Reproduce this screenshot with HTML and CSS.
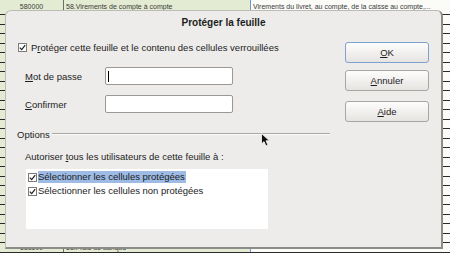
FILE: index.html
```html
<!DOCTYPE html>
<html lang="fr">
    <head>
        <meta charset="utf-8" />
        <title>Protéger la feuille</title>
        <link rel="stylesheet" href="styles.css">
    </head>
    <body>
        <div class="ecran">
            <div class="feuille">
                <div class="ligne ligne--tete">
                    <div class="cellule col-a">580000</div>
                    <div class="cellule col-b">58.Virements de compte à compte</div>
                    <div class="cellule col-c">Virements du livret, au compte, de la caisse au compte,...</div>
                </div>
                <div class="ligne"><div class="cellule col-a"></div><div class="cellule col-b"></div><div class="cellule col-c"></div></div>
                <div class="ligne"><div class="cellule col-a"></div><div class="cellule col-b"></div><div class="cellule col-c"></div></div>
                <div class="ligne"><div class="cellule col-a"></div><div class="cellule col-b"></div><div class="cellule col-c"></div></div>
                <div class="ligne"><div class="cellule col-a"></div><div class="cellule col-b"></div><div class="cellule col-c"></div></div>
                <div class="ligne"><div class="cellule col-a"></div><div class="cellule col-b"></div><div class="cellule col-c"></div></div>
                <div class="ligne"><div class="cellule col-a"></div><div class="cellule col-b"></div><div class="cellule col-c"></div></div>
                <div class="ligne"><div class="cellule col-a"></div><div class="cellule col-b"></div><div class="cellule col-c"></div></div>
                <div class="ligne"><div class="cellule col-a"></div><div class="cellule col-b"></div><div class="cellule col-c"></div></div>
                <div class="ligne"><div class="cellule col-a"></div><div class="cellule col-b"></div><div class="cellule col-c"></div></div>
                <div class="ligne"><div class="cellule col-a"></div><div class="cellule col-b"></div><div class="cellule col-c"></div></div>
                <div class="ligne"><div class="cellule col-a"></div><div class="cellule col-b"></div><div class="cellule col-c"></div></div>
                <div class="ligne"><div class="cellule col-a"></div><div class="cellule col-b"></div><div class="cellule col-c"></div></div>
                <div class="ligne"><div class="cellule col-a"></div><div class="cellule col-b"></div><div class="cellule col-c"></div></div>
                <div class="ligne"><div class="cellule col-a"></div><div class="cellule col-b"></div><div class="cellule col-c"></div></div>
                <div class="ligne"><div class="cellule col-a"></div><div class="cellule col-b"></div><div class="cellule col-c"></div></div>
                <div class="ligne"><div class="cellule col-a"></div><div class="cellule col-b"></div><div class="cellule col-c"></div></div>
                <div class="ligne"><div class="cellule col-a"></div><div class="cellule col-b"></div><div class="cellule col-c"></div></div>
                <div class="ligne"><div class="cellule col-a"></div><div class="cellule col-b"></div><div class="cellule col-c"></div></div>
                <div class="ligne"><div class="cellule col-a"></div><div class="cellule col-b"></div><div class="cellule col-c"></div></div>
                <div class="ligne"><div class="cellule col-a"></div><div class="cellule col-b"></div><div class="cellule col-c"></div></div>
                <div class="ligne"><div class="cellule col-a"></div><div class="cellule col-b"></div><div class="cellule col-c"></div></div>
                <div class="ligne"><div class="cellule col-a"></div><div class="cellule col-b"></div><div class="cellule col-c"></div></div>
                <div class="ligne"><div class="cellule col-a"></div><div class="cellule col-b"></div><div class="cellule col-c"></div></div>
                <div class="ligne"><div class="cellule col-a">581000</div><div class="cellule col-b">58.Virements internes</div><div class="cellule col-c"></div></div>
                <div class="ligne"><div class="cellule col-a">581100</div><div class="cellule col-b">58.Frais de banque</div><div class="cellule col-c"></div></div>
            </div>

            <div class="dialogue">
                <div class="dialogue_titre">Protéger la feuille</div>

                <div class="dialogue_corps">
                    <div class="colonne">
                        <div class="option option--principale">
                            <svg class="case" viewBox="0 0 9 9"><rect x="0.5" y="0.5" width="8" height="8" fill="#fff" stroke="#7b7b7b"/><path d="M1.8 4.6 L3.7 6.6 L7.2 2.2" fill="none" stroke="#1e1e1e" stroke-width="1.2"/></svg>
                            <span>P<u>r</u>otéger cette feuille et le contenu des cellules verrouillées</span>
                        </div>

                        <div class="champ champ--passe">
                            <label class="champ_etiquette"><u>M</u>ot de passe</label>
                            <div class="champ_saisie"><span class="curseur-texte"></span></div>
                        </div>

                        <div class="champ champ--confirmer">
                            <label class="champ_etiquette"><u>C</u>onfirmer</label>
                            <div class="champ_saisie"></div>
                        </div>

                        <div class="separateur">
                            <span>Options</span>
                            <div class="separateur_trait"></div>
                        </div>

                        <div class="autoriser">Autoriser <u>t</u>ous les utilisateurs de cette feuille à :</div>

                        <div class="liste">
                            <div class="liste_item">
                                <svg class="case" viewBox="0 0 9 9"><rect x="0.5" y="0.5" width="8" height="8" fill="#fff" stroke="#7b7b7b"/><path d="M1.8 4.6 L3.7 6.6 L7.2 2.2" fill="none" stroke="#1e1e1e" stroke-width="1.2"/></svg>
                                <span class="liste_texte liste_texte--choisi">Sélectionner les cellules protégées</span>
                            </div>
                            <div class="liste_item">
                                <svg class="case" viewBox="0 0 9 9"><rect x="0.5" y="0.5" width="8" height="8" fill="#fff" stroke="#7b7b7b"/><path d="M1.8 4.6 L3.7 6.6 L7.2 2.2" fill="none" stroke="#1e1e1e" stroke-width="1.2"/></svg>
                                <span class="liste_texte">Sélectionner les cellules non protégées</span>
                            </div>
                        </div>
                    </div>

                    <div class="boutons">
                        <button class="bouton bouton--ok"><u>O</u>K</button>
                        <button class="bouton bouton--annuler"><u>A</u>nnuler</button>
                        <button class="bouton bouton--aide"><u>A</u>ide</button>
                    </div>
                </div>
            </div>

            <svg class="pointeur" viewBox="0 0 10 14" width="10" height="14">
                <path d="M0.5 0.5 L0.5 11 L3 8.6 L5 13 L7 12.1 L5 7.8 L8.5 7.8 Z" fill="#111" stroke="#fff" stroke-width="0.8"/>
            </svg>
        </div>
    </body>
</html>
```

FILE: styles.css
```css
* {
    padding: 0;
    margin: 0;
    box-sizing: border-box;
}

body {
    font-family: "Liberation Sans", Arial, sans-serif;
    background-color: #fff;
    overflow: hidden;
}

.ecran {
    position: relative;
    width: 450px;
    height: 255px;
    overflow: hidden;
}

/* FEUILLE DE CALCUL EN DESSOUS */
.feuille {
    display: flex;
    flex-direction: column;
}

.ligne {
    display: flex;
    height: 9.5px;
    border-bottom: 1px solid #2a2a2a;
}

.ligne--tete {
    height: 15px;
}

.cellule {
    font-size: 7px;
    line-height: 9px;
    color: #3a3a3a;
    white-space: nowrap;
    overflow: hidden;
}

.ligne--tete .cellule {
    line-height: 14px;
}

.col-a {
    width: 64px;
    text-align: center;
    background-color: #e4ebd3;
    border-right: 1px solid #6b6b6b;
}

.col-b {
    width: 187px;
    padding-left: 2px;
    background-color: #e4ebd3;
    border-right: 1px solid #6f97d4;
}

.col-c {
    flex: 1;
    padding-left: 2px;
    background-color: #fbfbf8;
}

/* BOITE DE DIALOGUE */
.dialogue {
    position: absolute;
    left: 5px;
    top: 10px;
    width: 438px;
    height: 239px;
    background-color: #edecea;
    border: 1px solid #bdbbb8;
    border-right: 2px solid #8e8c89;
    border-bottom: 2px solid #8e8c89;
    border-radius: 6px 6px 0 0;
    color: #1c1c1c;
    font-size: 9.5px;
}

.dialogue_titre {
    height: 23px;
    line-height: 23px;
    text-align: center;
    font-weight: bold;
    font-size: 10px;
}

.dialogue_corps {
    display: flex;
    gap: 15px;
    padding-left: 11px;
}

.colonne {
    display: flex;
    flex-direction: column;
    width: 313px;
}

.option {
    display: flex;
    align-items: center;
    gap: 4px;
}

.option--principale {
    height: 16px;
    margin-top: 5px;
    padding-left: 1px;
}

.case {
    width: 9px;
    height: 9px;
    flex-shrink: 0;
}

.champ {
    display: flex;
    align-items: center;
    height: 18px;
    padding-left: 8px;
}

.champ--passe {
    margin-top: 12px;
}

.champ--confirmer {
    margin-top: 10px;
}

.champ_etiquette {
    width: 80px;
}

.champ_saisie {
    width: 128px;
    height: 18px;
    background-color: #fff;
    border: 1px solid #9a9895;
    border-radius: 2px;
    padding: 3px 2px;
}

.curseur-texte {
    display: block;
    width: 1px;
    height: 11px;
    background-color: #000;
}

.separateur {
    display: flex;
    align-items: center;
    gap: 2px;
    height: 14px;
    margin-top: 14px;
}

.separateur_trait {
    flex: 1;
    height: 2px;
    border-top: 1px solid #a9a7a4;
    border-bottom: 1px solid #fbfbfa;
}

.autoriser {
    height: 14px;
    line-height: 14px;
    margin-top: 9px;
    padding-left: 8px;
}

.liste {
    width: 242px;
    height: 60px;
    margin-top: 5px;
    margin-left: 9px;
    padding: 1px 2px;
    background-color: #fff;
}

.liste_item {
    display: flex;
    align-items: center;
    gap: 1px;
    height: 14px;
}

.liste_texte {
    line-height: 12px;
    padding-right: 1px;
}

.liste_texte--choisi {
    background-color: #9dbbe5;
}

.boutons {
    display: flex;
    flex-direction: column;
    width: 84px;
}

.bouton {
    height: 21px;
    font-family: inherit;
    font-size: 9.5px;
    color: #1c1c1c;
    background: linear-gradient(#fdfdfc, #e6e4e1);
    border: 1px solid #a8a6a3;
    border-radius: 3px;
}

.bouton--ok {
    margin-top: 8px;
    border-color: #7fa1cd;
}

.bouton--annuler {
    margin-top: 7px;
}

.bouton--aide {
    margin-top: 10px;
}

.pointeur {
    position: absolute;
    left: 261px;
    top: 133px;
}
```
